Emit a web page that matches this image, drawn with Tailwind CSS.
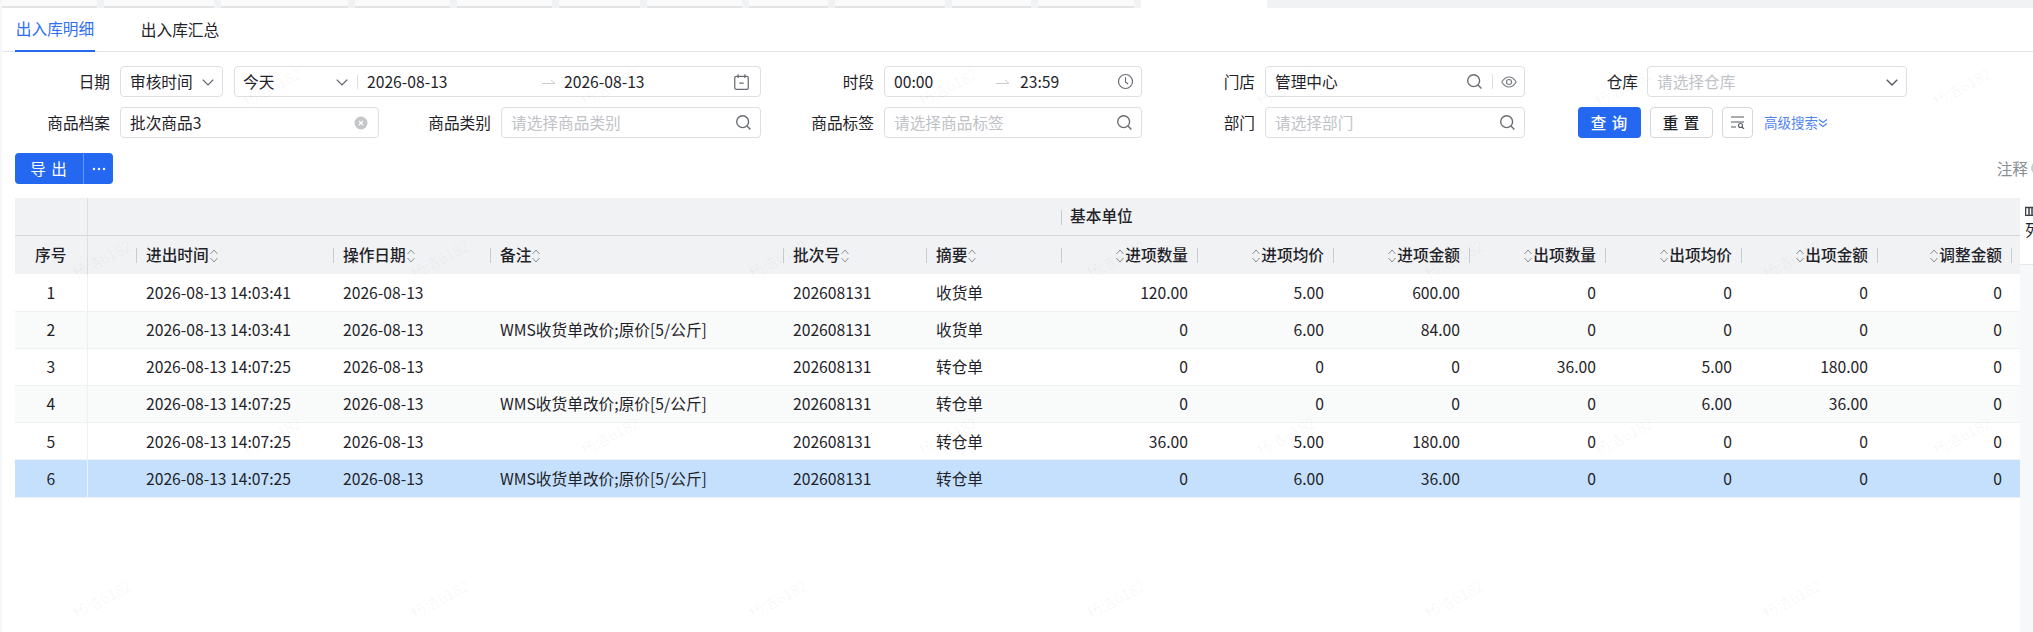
<!DOCTYPE html>
<html lang="zh-CN">
<head>
    <meta charset="UTF-8">
    <title>出入库明细</title>
    <script src="https://cdn.jsdelivr.net/npm/@tailwindcss/browser@4"></script>
</head>
<body class="bg-white">
<div class="relative w-[2033px] h-[632px] overflow-hidden border-l-2 border-[#f6f7f9] bg-white text-[#1f2329] text-[15.7px] font-['Noto_Sans_CJK_SC','Noto_Sans',sans-serif]">

    <!-- tab strip, cut off by the screenshot -->
    <div id="pageTabs" class="flex gap-[7px] h-[8px] bg-[#f1f2f4] -ml-[2px] pl-[2px]"></div>

    <!-- sub tabs -->
    <div class="flex gap-[45px] h-[44px] pl-[13px] border-b border-[#e3e4e7]">
        <div class="h-[44px] w-[80px] border-b-[2px] border-[#2468f2] text-[#2f6ff0] flex items-center justify-center whitespace-nowrap">出入库明细</div>
        <div class="h-[44px] w-[80px] flex items-center justify-center whitespace-nowrap">出入库汇总</div>
    </div>

    <!-- filters -->
    <div class="flex items-center h-[31px] mt-[14px] pl-[13px]">
        <div class="w-[95px] mr-[10px] text-right">日期</div>
        <div class="w-[103px] h-[31px] mr-[11px] pl-[9px] pr-[7px] flex items-center justify-between border border-[#dcdfe3] rounded-[4px]">
            <span class="whitespace-nowrap">审核时间</span>
            <svg class="w-[14px] h-[14px] text-[#60646b]" viewBox="0 0 12 12" fill="none" stroke="currentColor" stroke-width="1.1"><path d="M1.500 4l4.500 4.500L10.500 4"/></svg>
        </div>
        <div class="w-[527px] h-[31px] flex items-center border border-[#dcdfe3] rounded-[4px]">
            <span class="ml-[8px] w-[92px]">今天</span>
            <svg class="w-[14px] h-[14px] text-[#60646b]" viewBox="0 0 12 12" fill="none" stroke="currentColor" stroke-width="1.1"><path d="M1.500 4l4.500 4.500L10.500 4"/></svg>
            <span class="ml-[8px] w-px h-[14px] bg-[#dcdfe3]"></span>
            <span class="ml-[9px] w-[175px] whitespace-nowrap">2026-08-13</span>
            <svg class="w-[14px] h-[8px] text-[#c9ccd1]" viewBox="0 0 14 8" fill="none" stroke="currentColor"><path d="M0 5.500h13L9 2"/></svg>
            <span class="ml-[8px] whitespace-nowrap">2026-08-13</span>
            <svg class="ml-auto mr-[10px] w-[17px] h-[18px] text-[#686c72]" viewBox="0 0 15 16" fill="none" stroke="currentColor" stroke-width="1.1"><rect x="1.500" y="3" width="12" height="11.500" rx="1.200"/><path d="M4.500 1v3.500M10.500 1v3.500M5.500 9h4"/></svg>
        </div>
        <div class="w-[113px] mr-[10px] text-right">时段</div>
        <div class="w-[258px] h-[31px] flex items-center border border-[#dcdfe3] rounded-[4px]">
            <span class="ml-[9px] w-[102px]">00:00</span>
            <svg class="w-[14px] h-[8px] text-[#c9ccd1]" viewBox="0 0 14 8" fill="none" stroke="currentColor"><path d="M0 5.500h13L9 2"/></svg>
            <span class="ml-[10px]">23:59</span>
            <svg class="ml-auto mr-[7px] w-[17px] h-[17px] text-[#686c72]" viewBox="0 0 16 16" fill="none" stroke="currentColor" stroke-width="1.1"><circle cx="8" cy="8" r="6.600"/><path d="M8 4v4.400l2.400 2"/></svg>
        </div>
        <div class="w-[113px] mr-[10px] text-right">门店</div>
        <div class="w-[260px] h-[31px] flex items-center border border-[#dcdfe3] rounded-[4px]">
            <span class="ml-[9px]">管理中心</span>
            <svg class="ml-auto w-[17px] h-[17px] text-[#686c72]" viewBox="0 0 16 16" fill="none" stroke="currentColor" stroke-width="1.3"><circle cx="7.200" cy="7.200" r="5.600"/><path d="M11.300 11.300l3.200 3.200"/></svg>
            <span class="ml-[9px] w-px h-[15px] bg-[#dcdfe3]"></span>
            <svg class="ml-[8px] mr-[7px] w-[16px] h-[14px] text-[#75797f]" viewBox="0 0 16 14" fill="none" stroke="currentColor" stroke-width="1.1"><path d="M.8 7C3 3.400 5.300 2 8 2s5 1.400 7.200 5C13 10.600 10.700 12 8 12S3 10.600.8 7z"/><circle cx="8" cy="7" r="2.500"/></svg>
        </div>
        <div class="w-[113px] mr-[9px] text-right">仓库</div>
        <div class="w-[260px] h-[31px] pl-[9px] pr-[7px] flex items-center justify-between border border-[#dcdfe3] rounded-[4px]">
            <span class="text-[#bfc2c7]">请选择仓库</span>
            <svg class="w-[14px] h-[14px] text-[#55595f]" viewBox="0 0 12 12" fill="none" stroke="currentColor" stroke-width="1.2"><path d="M1.500 4l4.500 4.500L10.500 4"/></svg>
        </div>
    </div>

    <div class="flex items-center h-[31px] mt-[10px] pl-[13px]">
        <div class="w-[95px] mr-[10px] text-right">商品档案</div>
        <div class="w-[259px] h-[31px] pl-[9px] pr-[10px] flex items-center justify-between border border-[#dcdfe3] rounded-[4px]">
            <span>批次商品3</span>
            <svg class="w-[14px] h-[14px]" viewBox="0 0 14 14"><circle cx="7" cy="7" r="6.500" fill="#c4c6ca"/><path d="M5 5l4 4M9 5l-4 4" stroke="#fff" stroke-width="1.300"/></svg>
        </div>
        <div class="w-[112px] mr-[10px] text-right">商品类别</div>
        <div class="w-[260px] h-[31px] pl-[9px] pr-[8px] flex items-center justify-between border border-[#dcdfe3] rounded-[4px]">
            <span class="text-[#bfc2c7]">请选择商品类别</span>
            <svg class="w-[17px] h-[17px] text-[#686c72]" viewBox="0 0 16 16" fill="none" stroke="currentColor" stroke-width="1.3"><circle cx="7.200" cy="7.200" r="5.600"/><path d="M11.300 11.300l3.200 3.200"/></svg>
        </div>
        <div class="w-[113px] mr-[10px] text-right">商品标签</div>
        <div class="w-[258px] h-[31px] pl-[9px] pr-[8px] flex items-center justify-between border border-[#dcdfe3] rounded-[4px]">
            <span class="text-[#bfc2c7]">请选择商品标签</span>
            <svg class="w-[17px] h-[17px] text-[#686c72]" viewBox="0 0 16 16" fill="none" stroke="currentColor" stroke-width="1.3"><circle cx="7.200" cy="7.200" r="5.600"/><path d="M11.300 11.300l3.200 3.200"/></svg>
        </div>
        <div class="w-[113px] mr-[10px] text-right">部门</div>
        <div class="w-[260px] h-[31px] pl-[9px] pr-[8px] flex items-center justify-between border border-[#dcdfe3] rounded-[4px]">
            <span class="text-[#bfc2c7]">请选择部门</span>
            <svg class="w-[17px] h-[17px] text-[#686c72]" viewBox="0 0 16 16" fill="none" stroke="currentColor" stroke-width="1.3"><circle cx="7.200" cy="7.200" r="5.600"/><path d="M11.300 11.300l3.200 3.200"/></svg>
        </div>
        <button class="ml-[53px] w-[63px] h-[31px] rounded-[4px] bg-[#2468f2] text-white font-medium text-[15.5px] tracking-[1px]">查 询</button>
        <button class="ml-[9px] w-[63px] h-[31px] rounded-[4px] border border-[#d5d7db] font-medium text-[15.5px] tracking-[1px]">重 置</button>
        <button class="ml-[9px] w-[31px] h-[31px] rounded-[4px] border border-[#d5d7db] flex items-center justify-center">
            <svg class="w-[14px] h-[13px] text-[#55595f]" viewBox="0 0 14 13" fill="none" stroke="currentColor" stroke-width="1.100"><path d="M0 1h13M0 6h13M0 11h5"/><circle cx="9.500" cy="9.500" r="2"/><path d="M11 11l2 2"/></svg>
        </button>
        <span class="ml-[11px] text-[13.5px] text-[#4f83f1] whitespace-nowrap">高级搜索</span>
        <svg class="w-[10px] h-[10px] text-[#4f83f1]" viewBox="0 0 10 10" fill="none" stroke="currentColor" stroke-width="1.200"><path d="M1 1.500l4 3 4-3M1 5.500l4 3 4-3"/></svg>
    </div>

    <!-- toolbar -->
    <div class="flex items-center justify-between h-[31px] mt-[15px] pl-[13px]">
        <div class="flex w-[98px] h-[31px] rounded-[4px] bg-[#2468f2] text-white">
            <span class="w-[68px] flex items-center justify-center text-[15.5px] tracking-[1px]">导 出</span>
            <span class="w-[30px] flex items-center justify-center border-l border-[#6b98f5]">
                <svg class="w-[14px] h-[4px]" viewBox="0 0 14 4" fill="currentColor"><circle cx="2" cy="2" r="1.200"/><circle cx="7" cy="2" r="1.200"/><circle cx="12" cy="2" r="1.200"/></svg>
            </span>
        </div>
        <div class="flex items-center -mr-[10px]">
            <span class="text-[#8a8e94] whitespace-nowrap">注释</span>
            <span class="ml-[3px] w-[12px] h-[12px] rounded-full bg-[#c9ccd1]"></span>
        </div>
    </div>

    <!-- table -->
    <div class="flex items-start mt-[14px] pl-[13px]">
        <table class="table-fixed border-collapse w-[2005px] shrink-0">
            <colgroup>
                <col class="w-[72px]"><col class="w-[49px]"><col class="w-[197px]"><col class="w-[157px]"><col class="w-[293px]"><col class="w-[143px]"><col class="w-[135px]">
                <col class="w-[136px]"><col class="w-[136px]"><col class="w-[136px]"><col class="w-[136px]"><col class="w-[136px]"><col class="w-[136px]"><col class="w-[134px]"><col class="w-[9px]">
            </colgroup>
            <thead id="thead" class="bg-[#f1f2f4]"></thead>
            <tbody id="tbody"></tbody>
        </table>
        <aside class="w-[13px] shrink-0">
            <div class="h-[67px] border-b border-[#e6e7ea] pl-[5px] pt-[8px] overflow-hidden">
                <svg class="w-[10px] h-[10px] text-[#3b3f45]" viewBox="0 0 10 10" fill="none" stroke="currentColor" stroke-width="1.500"><path d="M.5 1.500h9v8h-9zM4 1.500v8M7 1.500v8"/></svg>
                <div class="mt-[4px] leading-[20px] whitespace-nowrap">列</div>
            </div>
            <div class="h-[368px] bg-[#f7f8fa]"></div>
        </aside>
    </div>

    <!-- watermark -->
    <div id="watermark" class="absolute inset-0 pointer-events-none"></div>
</div>

<script>
    const pageTabs = [95, 110, 127, 95, 95, 81, 95, 79, 110, 79, 96];
    document.getElementById('pageTabs').innerHTML = pageTabs.map(w =>
        `<div class="h-[8px] bg-[#fafafa] border-b-2 border-[#e2e3e5]" style="width:${w}px"></div>`
    ).join('') + '<div class="h-[8px] w-[126px] bg-white"></div>';

    // 表头
    const sortIcon = '<svg class="inline-block w-[10px] h-[16px] align-[-3px] text-[#8d9197]" viewBox="0 0 10 16" fill="none" stroke="currentColor"><path d="M1.500 6L5 2l3.500 4M1.500 10L5 14l3.500-4"/></svg>';
    const sep = '<span class="absolute left-0 top-[12px] w-px h-[15px] bg-[#c8cbd0]"></span>';
    const left = ['进出时间', '操作日期', '备注', '批次号', '摘要'];
    const right = ['进项数量', '进项均价', '进项金额', '出项数量', '出项均价', '出项金额', '调整金额'];
    document.getElementById('thead').innerHTML = `
        <tr class="h-[37px] border-b border-[#d5d7dc]">
            <th></th>
            <th colspan="6" class="border-l border-[#dcdee2]"></th>
            <th colspan="8" class="relative text-left pl-[9px] font-medium">${sep}基本单位</th>
        </tr>
        <tr class="h-[39px]">
            <th class="font-medium">序号</th>
            <th class="border-l border-[#dcdee2]"></th>
            ${left.map(t => `<th class="relative text-left pl-[10px] font-medium whitespace-nowrap">${sep}${t}${sortIcon}</th>`).join('')}
            ${right.map(t => `<th class="relative text-right pr-[9px] font-medium whitespace-nowrap">${sep}${sortIcon}${t}</th>`).join('')}
            <th class="relative">${sep}</th>
        </tr>`;

    const rows = [
        ['2026-08-13 14:03:41', '', '收货单', '120.00', '5.00', '600.00', '0', '0', '0', '0'],
        ['2026-08-13 14:03:41', 'WMS收货单改价;原价[5/公斤]', '收货单', '0', '6.00', '84.00', '0', '0', '0', '0'],
        ['2026-08-13 14:07:25', '', '转仓单', '0', '0', '0', '36.00', '5.00', '180.00', '0'],
        ['2026-08-13 14:07:25', 'WMS收货单改价;原价[5/公斤]', '转仓单', '0', '0', '0', '0', '6.00', '36.00', '0'],
        ['2026-08-13 14:07:25', '', '转仓单', '36.00', '5.00', '180.00', '0', '0', '0', '0'],
        ['2026-08-13 14:07:25', 'WMS收货单改价;原价[5/公斤]', '转仓单', '0', '6.00', '36.00', '0', '0', '0', '0'],
    ];
    document.getElementById('tbody').innerHTML = rows.map((r, i) => {
        const bg = i === 5 ? 'bg-[#c4e0fd]' : (i % 2 ? 'bg-[#f9fafa]' : 'bg-white');
        const [time, note, summary, ...nums] = r;
        return `<tr class="h-[37.2px] border-b border-[#eff0f2] ${bg}">
            <td class="text-center">${i + 1}</td>
            <td class="border-l border-[#eff0f2]"></td>
            <td class="pl-[10px] whitespace-nowrap">${time}</td>
            <td class="pl-[10px] whitespace-nowrap">2026-08-13</td>
            <td class="pl-[10px] whitespace-nowrap">${note}</td>
            <td class="pl-[10px] whitespace-nowrap">202608131</td>
            <td class="pl-[10px] whitespace-nowrap">${summary}</td>
            ${nums.map(n => `<td class="text-right pr-[9px]">${n}</td>`).join('')}
            <td></td>
        </tr>`;
    }).join('');

    // 水印
    const marks = [[76, 101], [248, -69], [425, 101], [588, -69]];
    document.getElementById('watermark').innerHTML = marks.map(([top, x]) => {
        let spans = '';
        for (let i = 0; i < 7; i++) {
            spans += '<span class="w-[338px] shrink-0 text-center text-[15px] text-black/[0.04] -rotate-[28deg] whitespace-nowrap">杨浩6182</span>';
        }
        return `<div class="absolute flex" style="top:${top}px;left:${x}px">${spans}</div>`;
    }).join('');
</script>
</body>
</html>
